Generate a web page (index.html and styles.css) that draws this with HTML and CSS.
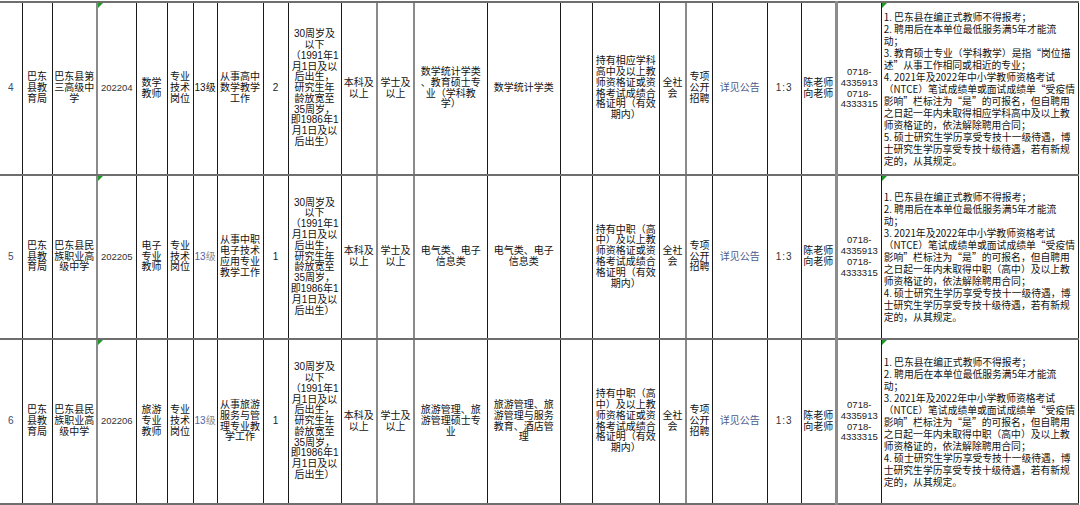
FILE: index.html
```html
<!DOCTYPE html>
<html lang="zh-CN">
<head>
<meta charset="utf-8">
<title>招聘岗位表</title>
<link rel="stylesheet" href="styles.css">
</head>
<body>
<table class="sheet">
  <colgroup>
    <col class="w22"><col class="w30"><col class="w45"><col class="w39"><col class="w31"><col class="w26"><col class="w24"><col class="w46"><col class="w25"><col class="w53"><col class="w36"><col class="w37"><col class="w73"><col class="w73"><col class="w32"><col class="w67"><col class="w27"><col class="w26"><col class="w55"><col class="w34"><col class="w35"><col class="w45"><col class="w197">
  </colgroup>
  <tbody>
    <tr class="r1">
      <td class="num">4</td>
      <td>巴东<br>县教<br>育局</td>
      <td>巴东县第<br>三高级中<br>学</td>
      <td class="code flag gl">202204</td>
      <td>数学<br>教师</td>
      <td>专业<br>技术<br>岗位</td>
      <td>13级</td>
      <td>从事高中<br>数学教学<br>工作</td>
      <td class="lat">2</td>
      <td class="age">30周岁及<br>以下<br>（1991年1<br>月1日及以<br>后出生，<br>研究生年<br>龄放宽至<br>35周岁，<br>即1986年1<br>月1日及以<br>后出生）</td>
      <td>本科及<br>以上</td>
      <td class="gl">学士及<br>以上</td>
      <td class="gl">数学统计学类<br>、教育硕士专<br>业（学科教<br>学）</td>
      <td>数学统计学类</td>
      <td></td>
      <td class="cert">持有相应学科<br>高中及以上教<br>师资格证或资<br>格考试成绩合<br>格证明（有效<br>期内）</td>
      <td>全社<br>会</td>
      <td class="gl">专项<br>公开<br>招聘</td>
      <td class="link">详见公告</td>
      <td class="ratio">1:3</td>
      <td>陈老师<br>向老师</td>
      <td class="phone gw">0718-<br>4335913<br>0718-<br>4333315</td>
      <td class="notes flag">1. 巴东县在编正式教师不得报考；<br>2. 聘用后在本单位最低服务满5年才能流<br>动；<br>3. 教育硕士专业（学科教学）是指“岗位描<br>述”从事工作相同或相近的专业；<br>4. 2021年及2022年中小学教师资格考试<br>（NTCE）笔试成绩单或面试成绩单“受疫情<br>影响”栏标注为“是”的可报名，但自聘用<br>之日起一年内未取得相应学科高中及以上教<br>师资格证的，依法解除聘用合同；<br>5. 硕士研究生学历享受专技十一级待遇，博<br>士研究生学历享受专技十级待遇，若有新规<br>定的，从其规定。</td>
    </tr>
    <tr class="r2">
      <td class="num">5</td>
      <td>巴东<br>县教<br>育局</td>
      <td>巴东县民<br>族职业高<br>级中学</td>
      <td class="code flag gl">202205</td>
      <td>电子<br>专业<br>教师</td>
      <td>专业<br>技术<br>岗位</td>
      <td><span class="blue">13</span><span class="grey">级</span></td>
      <td>从事中职<br>电子技术<br>应用专业<br>教学工作</td>
      <td class="lat">1</td>
      <td class="age">30周岁及<br>以下<br>（1991年1<br>月1日及以<br>后出生，<br>研究生年<br>龄放宽至<br>35周岁，<br>即1986年1<br>月1日及以<br>后出生）</td>
      <td>本科及<br>以上</td>
      <td class="gl">学士及<br>以上</td>
      <td class="gl">电气类、电子<br>信息类</td>
      <td>电气类、电子<br>信息类</td>
      <td></td>
      <td class="cert">持有中职（高<br>中）及以上教<br>师资格证或资<br>格考试成绩合<br>格证明（有效<br>期内）</td>
      <td>全社<br>会</td>
      <td class="gl">专项<br>公开<br>招聘</td>
      <td class="link">详见公告</td>
      <td class="ratio">1:3</td>
      <td>陈老师<br>向老师</td>
      <td class="phone gw">0718-<br>4335913<br>0718-<br>4333315</td>
      <td class="notes flag">1. 巴东县在编正式教师不得报考；<br>2. 聘用后在本单位最低服务满5年才能流<br>动；<br>3. 2021年及2022年中小学教师资格考试<br>（NTCE）笔试成绩单或面试成绩单“受疫情<br>影响”栏标注为“是”的可报名，但自聘用<br>之日起一年内未取得中职（高中）及以上教<br>师资格证的，依法解除聘用合同；<br>4. 硕士研究生学历享受专技十一级待遇，博<br>士研究生学历享受专技十级待遇，若有新规<br>定的，从其规定。</td>
    </tr>
    <tr class="r3">
      <td class="num">6</td>
      <td>巴东<br>县教<br>育局</td>
      <td>巴东县民<br>族职业高<br>级中学</td>
      <td class="code flag gl">202206</td>
      <td>旅游<br>专业<br>教师</td>
      <td>专业<br>技术<br>岗位</td>
      <td><span class="blue">13</span><span class="grey">级</span></td>
      <td>从事旅游<br>服务与管<br>理专业教<br>学工作</td>
      <td class="lat">1</td>
      <td class="age">30周岁及<br>以下<br>（1991年1<br>月1日及以<br>后出生，<br>研究生年<br>龄放宽至<br>35周岁，<br>即1986年1<br>月1日及以<br>后出生）</td>
      <td>本科及<br>以上</td>
      <td class="gl">学士及<br>以上</td>
      <td class="gl">旅游管理、旅<br>游管理硕士专<br>业</td>
      <td>旅游管理、旅<br>游管理与服务<br>教育、酒店管<br>理</td>
      <td></td>
      <td class="cert">持有中职（高<br>中）及以上教<br>师资格证或资<br>格考试成绩合<br>格证明（有效<br>期内）</td>
      <td>全社<br>会</td>
      <td class="gl">专项<br>公开<br>招聘</td>
      <td class="link">详见公告</td>
      <td class="ratio">1:3</td>
      <td>陈老师<br>向老师</td>
      <td class="phone gw">0718-<br>4335913<br>0718-<br>4333315</td>
      <td class="notes flag">1. 巴东县在编正式教师不得报考；<br>2. 聘用后在本单位最低服务满5年才能流<br>动；<br>3. 2021年及2022年中小学教师资格考试<br>（NTCE）笔试成绩单或面试成绩单“受疫情<br>影响”栏标注为“是”的可报名，但自聘用<br>之日起一年内未取得中职（高中）及以上教<br>师资格证的，依法解除聘用合同；<br>4. 硕士研究生学历享受专技十一级待遇，博<br>士研究生学历享受专技十级待遇，若有新规<br>定的，从其规定。</td>
    </tr>
  </tbody>
</table>
</body>
</html>
```
FILE: styles.css
```css
html, body {
  margin: 0;
  padding: 0;
  background: #ffffff;
}
body {
  padding-top: 1px;
}
.sheet {
  border-collapse: collapse;
  table-layout: fixed;
  width: 1079px;
  font-family: "Liberation Sans", "Noto Sans CJK SC", sans-serif;
  font-size: 10px;
  color: #111;
}
.w22 { width: 22px; }
.w24 { width: 24px; }
.w25 { width: 25px; }
.w26 { width: 26px; }
.w27 { width: 27px; }
.w30 { width: 30px; }
.w31 { width: 31px; }
.w32 { width: 32px; }
.w34 { width: 34px; }
.w35 { width: 35px; }
.w36 { width: 36px; }
.w37 { width: 37px; }
.w39 { width: 39px; }
.w45 { width: 45px; }
.w46 { width: 46px; }
.w53 { width: 53px; }
.w55 { width: 55px; }
.w67 { width: 67px; }
.w73 { width: 73px; }
.w197 { width: 197px; }

.sheet td {
  border-left: 1px solid #1a1a1a;
  border-right: 1px solid #1a1a1a;
  border-top: 2px solid #6e6e6e;
  border-bottom: 2px solid #6e6e6e;
  padding: 0 1px;
  text-align: center;
  vertical-align: middle;
  line-height: 10.8px;
  white-space: nowrap;
  overflow: hidden;
  position: relative;
}
.sheet td:first-child { border-left: none; }
.sheet td.gl { border-left: 2px solid #8a8a8a; }
.sheet td.gw { border-left: 3px solid #8c8c8c; }
.r1 { height: 173px; }
.r2 { height: 164px; }
.r3 { height: 165px; }

.num { color: #3d4a6a; font-size: 10px; }
.code { color: #333; font-size: 9.5px; }
.lat { color: #222; }
.age { line-height: 10.8px; }
.cert { line-height: 9.8px; }
.link { color: #4b5b8c; }
.ratio { color: #333; letter-spacing: 1px; }
.phone { line-height: 12.5px; color: #222; font-size: 9.5px; }
.blue { color: #4f63a8; }
.grey { color: #8a8a8a; }
.sheet td.notes {
  text-align: left;
  line-height: 12px;
  padding-left: 2px;
  font-family: "Noto Sans CJK SC", "Liberation Sans", sans-serif;
  font-size: 9.8px;
}
.flag::before {
  content: "";
  position: absolute;
  left: 0;
  top: 0;
  width: 0;
  height: 0;
  border-top: 5px solid #1f9a2a;
  border-right: 5px solid transparent;
}
```
